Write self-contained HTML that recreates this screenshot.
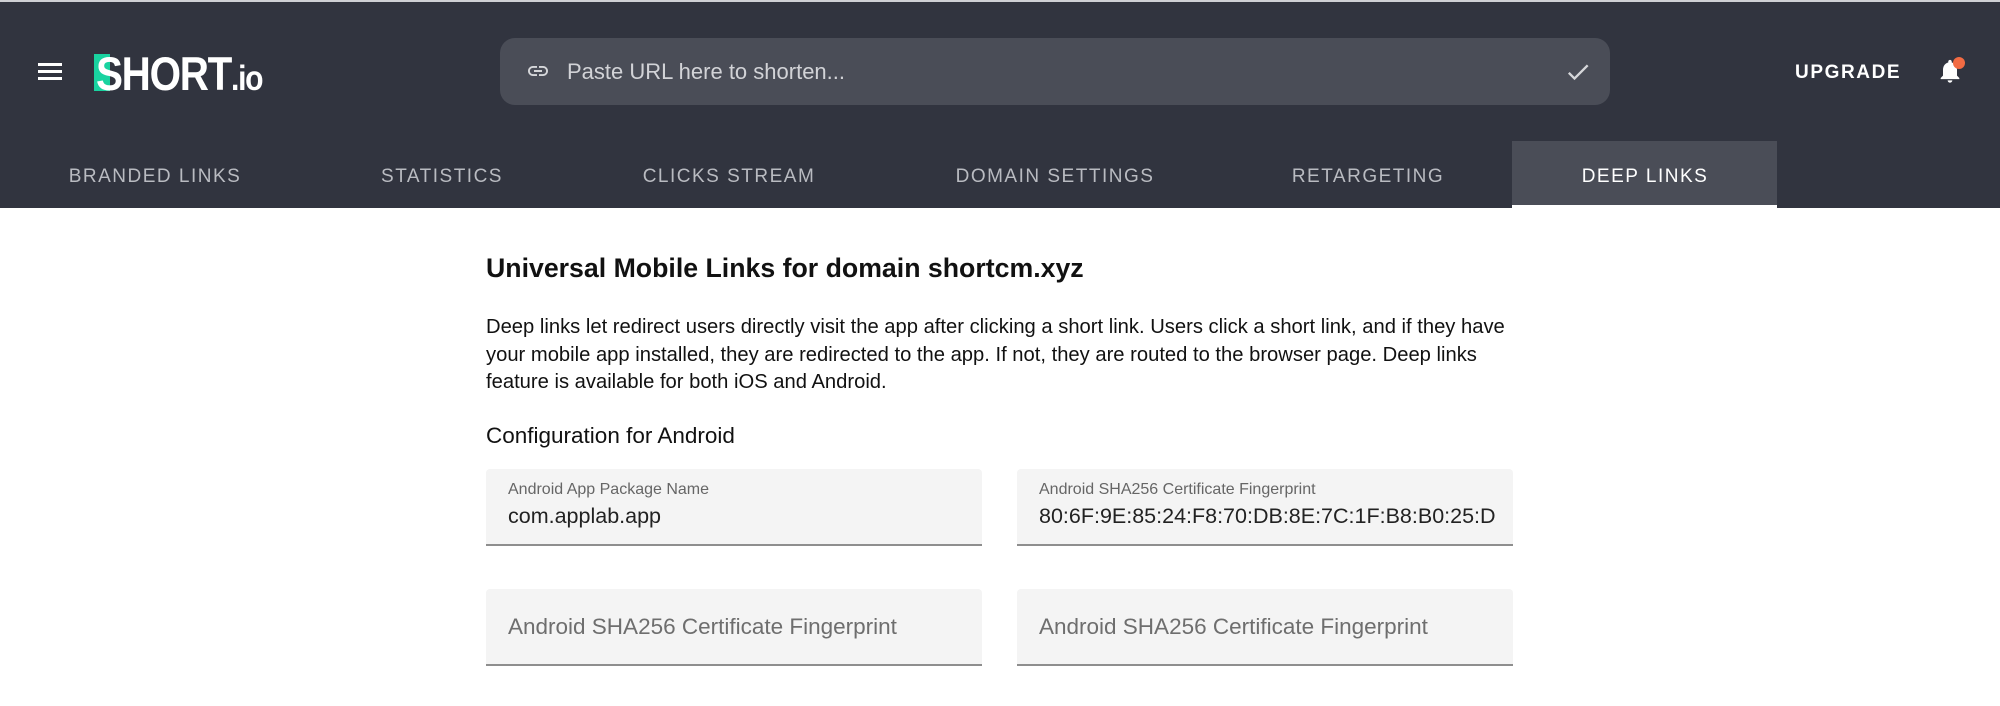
<!DOCTYPE html>
<html><head><meta charset="utf-8"><style>
*{margin:0;padding:0;box-sizing:border-box}
body{width:2000px;height:706px;background:#fff;font-family:"Liberation Sans",Arial,sans-serif;position:relative;overflow:hidden}
.hdr{position:absolute;left:0;top:2px;width:2000px;height:206px;background:#31343f}
.topline{position:absolute;left:0;top:0;width:2000px;height:2px;background:#cfd0d4}
.abs{position:absolute}
.tab{position:absolute;top:166px;font-size:19px;letter-spacing:1.5px;color:#b9bbc1;white-space:nowrap;transform:translateX(-50%)}
.field{position:absolute;width:496px;height:77px;background:#f4f4f4;border-bottom:2px solid #8e8e8e;border-radius:4px 4px 0 0}
.lbl{position:absolute;left:22px;top:12px;font-size:16px;color:#666}
.val{position:absolute;left:22px;top:35px;font-size:21.5px;color:#222;white-space:nowrap;overflow:hidden;width:468px}
.ph{position:absolute;left:22px;top:25px;font-size:22.5px;color:#6e6e6e}
</style></head><body>
<div class="topline"></div>
<div class="hdr"></div>
<div class="abs" style="left:38px;top:63px;width:24px;height:3px;background:#fff"></div>
<div class="abs" style="left:38px;top:70px;width:24px;height:3px;background:#fff"></div>
<div class="abs" style="left:38px;top:77px;width:24px;height:3px;background:#fff"></div>
<div class="abs" style="left:94px;top:54px;width:16px;height:37px;background:#19d3a0"></div>
<div class="abs" style="left:96px;top:46px;font-size:47px;font-weight:bold;color:#fff;letter-spacing:-1.5px;transform:scaleX(0.86);transform-origin:left">SHORT<span style="font-size:35px">.io</span></div>
<div class="abs" style="left:500px;top:38px;width:1110px;height:67px;background:#4a4d57;border-radius:15px"></div>
<svg class="abs" style="left:523px;top:59px" width="30" height="24" viewBox="0 0 24 24"><path fill="#d6d7da" d="M3.9 12c0-1.71 1.39-3.1 3.1-3.1h4V7H7c-2.76 0-5 2.24-5 5s2.24 5 5 5h4v-1.9H7c-1.71 0-3.1-1.39-3.1-3.1zM8 13h8v-2H8v2zm9-6h-4v1.9h4c1.71 0 3.1 1.39 3.1 3.1s-1.39 3.1-3.1 3.1h-4V17h4c2.76 0 5-2.24 5-5s-2.24-5-5-5z"/></svg>
<div class="abs" style="left:567px;top:59px;font-size:22px;color:#d2d3d7">Paste URL here to shorten...</div>
<svg class="abs" style="left:1563px;top:58px" width="30" height="28" viewBox="0 0 24 24"><path fill="#d6d7da" d="M9 16.17L4.83 12l-1.42 1.41L9 19 21 7l-1.41-1.41z"/></svg>
<div class="abs" style="left:1795px;top:62px;font-size:19px;font-weight:bold;letter-spacing:1.6px;color:#fff">UPGRADE</div>
<svg class="abs" style="left:1936px;top:56px" width="28" height="30" viewBox="0 0 24 24"><path fill="#fff" d="M12 22c1.1 0 2-.9 2-2h-4c0 1.1.9 2 2 2zm6-6v-5c0-3.07-1.63-5.64-4.5-6.32V4c0-.83-.67-1.5-1.5-1.5s-1.5.67-1.5 1.5v.68C7.64 5.36 6 7.92 6 11v5l-2 2v1h16v-1l-2-2z"/></svg>
<div class="abs" style="left:1953px;top:57px;width:12px;height:12px;border-radius:50%;background:#f26b43"></div>
<div class="abs" style="left:1512px;top:141px;width:265px;height:67px;background:#4a4d57;border-bottom:3px solid #fff"></div>
<div class="tab" style="left:155px">BRANDED LINKS</div>
<div class="tab" style="left:442px">STATISTICS</div>
<div class="tab" style="left:729px">CLICKS STREAM</div>
<div class="tab" style="left:1055px">DOMAIN SETTINGS</div>
<div class="tab" style="left:1368px">RETARGETING</div>
<div class="tab" style="left:1645px;color:#fff">DEEP LINKS</div>
<div class="abs" style="left:486px;top:253px;font-size:26.7px;font-weight:bold;color:#111">Universal Mobile Links for domain shortcm.xyz</div>
<div class="abs" style="left:486px;top:314px;font-size:20.2px;line-height:27.5px;color:#111;white-space:nowrap">Deep links let redirect users directly visit the app after clicking a short link. Users click a short link, and if they have<br>your mobile app installed, they are redirected to the app. If not, they are routed to the browser page. Deep links<br>feature is available for both iOS and Android.</div>
<div class="abs" style="left:486px;top:423px;font-size:22.5px;color:#111">Configuration for Android</div>
<div class="field" style="left:486px;top:469px"><div class="lbl">Android App Package Name</div><div class="val">com.applab.app</div></div>
<div class="field" style="left:1017px;top:469px"><div class="lbl">Android SHA256 Certificate Fingerprint</div><div class="val" style="width:462px">80:6F:9E:85:24:F8:70:DB:8E:7C:1F:B8:B0:25:D</div></div>
<div class="field" style="left:486px;top:589px"><div class="ph">Android SHA256 Certificate Fingerprint</div></div>
<div class="field" style="left:1017px;top:589px"><div class="ph">Android SHA256 Certificate Fingerprint</div></div>
</body></html>
